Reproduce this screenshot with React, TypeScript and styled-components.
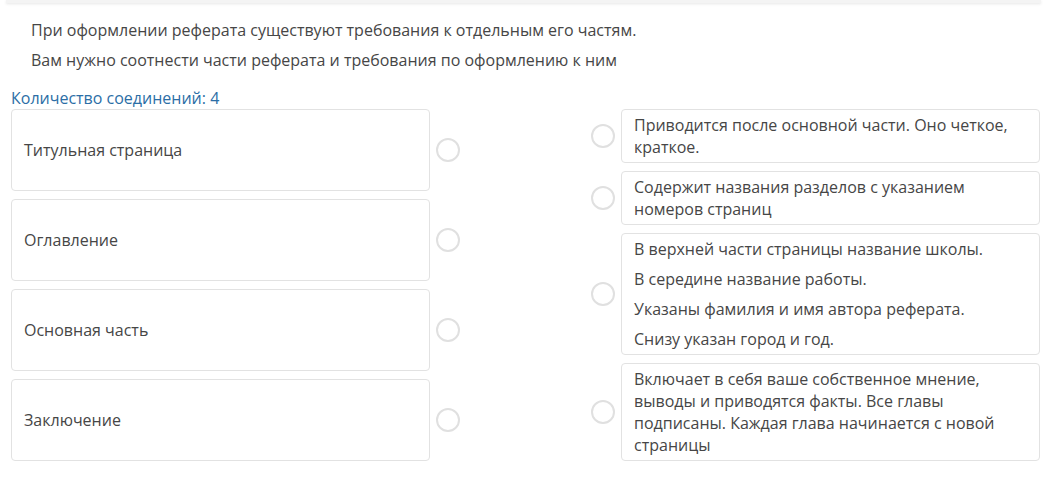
import React from 'react'
import styled, { createGlobalStyle } from 'styled-components'

const GlobalStyle = createGlobalStyle`
  body {
    margin: 0;
    background: #fff;
    font-family: "Open Sans", "Noto Sans", sans-serif;
    font-size: 16px;
    color: #464646;
  }
`

const Page = styled.div`
  width: 1055px;
  height: 481px;
  overflow: hidden;
`

const PrevCard = styled.div`
  margin: 0 14px 0 6px;
  height: 3px;
  background: #f4f4f4;
  box-shadow: 0 1px 3px rgba(0, 0, 0, 0.1);
`

const Intro = styled.div`
  padding: 16px 0 0 31px;
  p {
    margin: 0 0 8px;
    line-height: 22px;
  }
`

const Counter = styled.div`
  margin: 16px 0 0 11px;
  line-height: 22px;
  color: #2b6ea6;
`

const Board = styled.div`
  display: flex;
  justify-content: space-between;
  padding: 0 15px 0 11px;
`

const Column = styled.div`
  display: flex;
  flex-direction: column;
  gap: 8px;
`

const Row = styled.div`
  display: flex;
  align-items: center;
  gap: 6px;
`

const Card = styled.div<{ tall?: boolean }>`
  box-sizing: border-box;
  width: 419px;
  border: 1px solid #e2e2e2;
  border-radius: 4px;
  background: #fff;
  padding: ${({ tall }) => (tall ? '0 12px' : '4px 12px')};
  height: ${({ tall }) => (tall ? '82px' : 'auto')};
  display: flex;
  flex-direction: column;
  justify-content: center;
  line-height: 22px;

  p {
    margin: 0;
  }
  p + p {
    margin-top: 8px;
  }
`

const Dot = styled.span`
  flex: none;
  box-sizing: border-box;
  width: 24px;
  height: 24px;
  border-radius: 50%;
  border: 2px solid #e0e0e0;
`

const parts = ['Титульная страница', 'Оглавление', 'Основная часть', 'Заключение']

const requirements: string[][] = [
  ['Приводится после основной части. Оно четкое, краткое.'],
  ['Содержит названия разделов с указанием номеров страниц'],
  [
    'В верхней части страницы название школы.',
    'В середине название работы.',
    'Указаны фамилия и имя автора реферата.',
    'Снизу указан город и год.',
  ],
  ['Включает в себя ваше собственное мнение, выводы и приводятся факты. Все главы подписаны. Каждая глава начинается с новой страницы'],
]

export default function App() {
  return (
    <Page>
      <GlobalStyle />
      <PrevCard />
      <Intro>
        <p>При оформлении реферата существуют требования к отдельным его частям.</p>
        <p>Вам нужно соотнести части реферата и требования по оформлению к ним</p>
      </Intro>
      <Counter>Количество соединений: 4</Counter>
      <Board>
        <Column>
          {parts.map((p) => (
            <Row key={p}>
              <Card tall>{p}</Card>
              <Dot />
            </Row>
          ))}
        </Column>
        <Column>
          {requirements.map((r, i) => (
            <Row key={i}>
              <Dot />
              <Card>
                {r.map((line) => (
                  <p key={line}>{line}</p>
                ))}
              </Card>
            </Row>
          ))}
        </Column>
      </Board>
    </Page>
  )
}
